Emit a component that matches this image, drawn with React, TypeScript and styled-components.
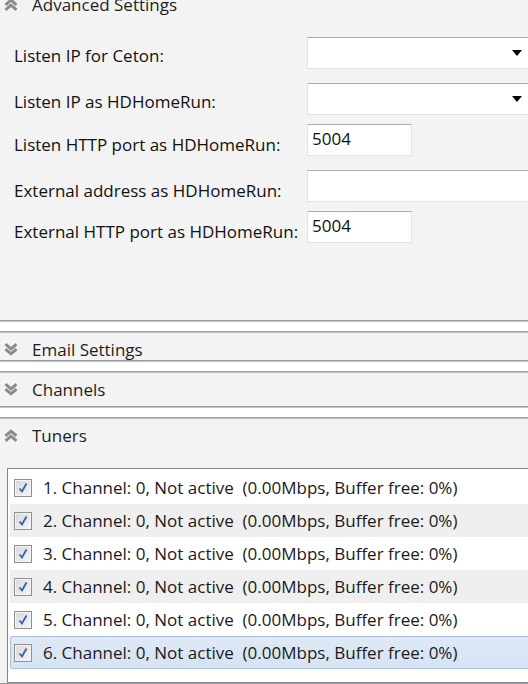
import React from 'react';
import styled, { createGlobalStyle } from 'styled-components';

const GlobalStyle = createGlobalStyle`
    html, body {
        margin: 0;
        padding: 0;
        background: #ffffff;
    }
    body {
        font-family: 'Open Sans', 'Noto Sans', sans-serif;
        font-size: 17px;
        color: #111;
    }
`;

const Page = styled.div`
    width: 528px;
    height: 684px;
    overflow: hidden;
    background: #ffffff;
    display: flex;
    flex-direction: column;
    gap: 10px;
`;

const Panel = styled.section<{ $height?: number; $offset?: number; $grow?: boolean }>`
    background: #f3f3f3;
    border-top: 1px solid #a3a3a3;
    border-bottom: 1px solid #9a9a9a;
    box-shadow: 0 1px 0 #c4c4c4, inset 0 1px 0 #bcbcbc;
    margin-top: ${(p) => (p.$offset ? `${p.$offset}px` : '0')};
    height: ${(p) => (p.$height ? `${p.$height}px` : 'auto')};
    flex: ${(p) => (p.$grow ? '1 0 auto' : '0 0 auto')};
    overflow: hidden;
    display: flex;
    flex-direction: column;
`;

const Header = styled.div`
    height: 35px;
    flex: 0 0 35px;
    display: flex;
    align-items: center;
    gap: 14px;
    padding-left: 4px;
    color: #1e1e1e;
    font-size: 17px;

    svg {
        flex: 0 0 auto;
    }
`;

const Form = styled.div`
    display: grid;
    grid-template-columns: 293px 1fr;
    padding-left: 14px;
`;

const Label = styled.div<{ $top: number; $shift: number }>`
    margin-top: ${(p) => p.$top}px;
    height: 32px;
    display: flex;
    align-items: center;
    padding-top: ${(p) => p.$shift}px;
    box-sizing: border-box;
    white-space: nowrap;
`;

const Field = styled.div<{ $top: number; $wide?: boolean }>`
    margin-top: ${(p) => p.$top}px;
    height: 32px;
    width: ${(p) => (p.$wide ? '228px' : '105px')};
    box-sizing: border-box;
    background: #fff;
    border: 1px solid #e2e3ea;
    border-top-color: #abadb3;
    display: flex;
    align-items: flex-start;
    justify-content: space-between;
    padding: 2px 12px 0 4px;
`;

const Arrow = styled.span`
    align-self: center;
    margin-top: -2px;
    width: 0;
    height: 0;
    border-left: 5px solid transparent;
    border-right: 5px solid transparent;
    border-top: 6px solid #000;
`;

const List = styled.div`
    margin: 15px 0 0 7px;
    width: 540px;
    flex: 1 0 auto;
    background: #fff;
    border: 1px solid #828790;
    padding: 2px 2px;
`;

const Row = styled.div<{ $alt?: boolean; $selected?: boolean }>`
    height: 33px;
    box-sizing: border-box;
    display: flex;
    align-items: center;
    padding-left: 3px;
    gap: 11px;
    white-space: pre;
    color: #1a1a1a;
    background: ${(p) => (p.$selected ? 'linear-gradient(#dfe9f6, #d6e3f3)' : p.$alt ? '#efefef' : '#fff')};
    border: 1px solid ${(p) => (p.$selected ? '#a9bfdc' : 'transparent')};
    border-radius: ${(p) => (p.$selected ? '2px' : '0')};
`;

const Box = styled.span`
    width: 18px;
    height: 18px;
    flex: 0 0 18px;
    box-sizing: border-box;
    border: 1px solid #8f8f8f;
    background: linear-gradient(135deg, #d8d8d8, #f6f6f6);
    box-shadow: inset 0 0 0 1px #f4f4f4;
    display: flex;
    align-items: center;
    justify-content: center;
`;

const Chevrons = ({ up }: { up: boolean }) => (
    <svg width="14" height="13" viewBox="0 0 14 13">
        <g fill="none" stroke="#8a8a8a" strokeWidth="3" transform={up ? '' : 'rotate(180 7 6.5)'}>
            <path d="M1.5 6.8 L7 2.2 L12.5 6.8" />
            <path d="M1.5 11.8 L7 7.2 L12.5 11.8" />
        </g>
    </svg>
);

const Check = () => (
    <Box>
        <svg width="12" height="12" viewBox="0 0 12 12">
            <path d="M2.5 6.5 L5 9.5 L9.5 1.5" fill="none" stroke="#3a5cb2" strokeWidth="1.8" />
        </svg>
    </Box>
);

const fields = [
    { label: 'Listen IP for Ceton:', top: 15, shift: 4, wide: true, combo: true },
    { label: 'Listen IP as HDHomeRun:', top: 14, shift: 4, wide: true, combo: true },
    { label: 'Listen HTTP port as HDHomeRun:', top: 9, shift: 9, value: '5004' },
    { label: 'External address as HDHomeRun:', top: 14, shift: 8, wide: true },
    { label: 'External HTTP port as HDHomeRun:', top: 9, shift: 8, value: '5004' },
];

const tuners = [1, 2, 3, 4, 5, 6];

const App = () => {
    return (
        <Page>
            <GlobalStyle />
            <Panel $offset={-14} $height={333}>
                <Header>
                    <Chevrons up />
                    Advanced Settings
                </Header>
                <Form>
                    {fields.map((f) => (
                        <React.Fragment key={f.label}>
                            <Label $top={f.top} $shift={f.shift}>
                                {f.label}
                            </Label>
                            <Field $top={f.top} $wide={f.wide}>
                                <span>{f.value}</span>
                                {f.combo && <Arrow />}
                            </Field>
                        </React.Fragment>
                    ))}
                </Form>
            </Panel>
            <Panel $height={28}>
                <Header>
                    <Chevrons up={false} />
                    Email Settings
                </Header>
            </Panel>
            <Panel $height={34}>
                <Header>
                    <Chevrons up={false} />
                    Channels
                </Header>
            </Panel>
            <Panel $grow>
                <Header>
                    <Chevrons up />
                    Tuners
                </Header>
                <List>
                    {tuners.map((n) => (
                        <Row key={n} $alt={n % 2 === 0} $selected={n === 6}>
                            <Check />
                            {`${n}. Channel: 0, Not active  (0.00Mbps, Buffer free: 0%)`}
                        </Row>
                    ))}
                </List>
            </Panel>
        </Page>
    );
};

export default App;
